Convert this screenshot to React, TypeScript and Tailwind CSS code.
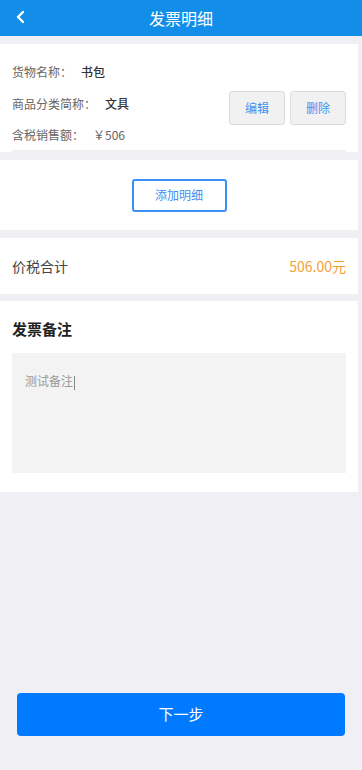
import React from "react";

const font = {
  fontFamily: '"Noto Sans CJK SC", "Liberation Sans", sans-serif',
};

function Row({ label, value, bold, h = "h-[32px]" }: { label: string; value: string; bold?: boolean; h?: string }) {
  return (
    <div className={`flex items-center ${h} text-[12px]`}>
      <span className="text-[#666]">{label}</span>
      <span className={bold ? "ml-[9px] font-medium text-[#333]" : "ml-[9px] text-[#666]"}>{value}</span>
    </div>
  );
}

export default function App() {
  return (
    <div className="w-[362px] h-[770px] bg-[#efeff4] flex flex-col" style={font}>
      <div className="h-9 bg-[#128ee9] flex items-center relative">
        <svg className="absolute left-[15px] top-[10px]" width="12" height="14" viewBox="0 0 12 14">
          <path d="M8 2 L3 7 L8 12" stroke="#fff" strokeWidth="2.4" fill="none" strokeLinecap="round" strokeLinejoin="round" />
        </svg>
        <div className="flex-1 text-center text-white text-[16px]">发票明细</div>
      </div>

      <div className="mt-2 mr-1 bg-white pt-[12px] px-3">
        <div className="flex items-start">
          <div className="flex-1">
            <Row label="货物名称：" value="书包" bold />
            <Row label="商品分类简称：" value="文具" bold />
            <Row label="含税销售额：" value="￥506" h="h-[30px]" />
          </div>
          <div className="flex gap-[5px] mt-[35px]">
            <button className="w-[56px] h-[34px] rounded-[3px] border border-[#dcdcdc] bg-[#f1f1f1] text-[#3a94f0] text-[12px]">编辑</button>
            <button className="w-[56px] h-[34px] rounded-[3px] border border-[#dcdcdc] bg-[#f1f1f1] text-[#3a94f0] text-[12px]">删除</button>
          </div>
        </div>
        <div className="h-[2px] bg-[#f0f0f3]" />
      </div>

      <div className="mt-2 mr-1 bg-white h-[70px] flex items-center justify-center">
        <button className="w-[95px] h-[33px] rounded-[3px] border-2 border-[#3b8ff5] text-[#3b8ff5] text-[12px] bg-white">添加明细</button>
      </div>

      <div className="mt-2 mr-1 bg-white h-[56px] flex items-center justify-between px-3">
        <span className="text-[14px] text-[#444]">价税合计</span>
        <span className="text-[14px] text-[#f5a033]">506.00元</span>
      </div>

      <div className="mt-[7px] mr-1 bg-white px-3 pt-[17px] pb-[19px]">
        <div className="text-[15px] font-bold text-[#222] leading-[22px]">发票备注</div>
        <div className="mt-[13px] h-[120px] bg-[#f3f3f3] px-[13px] pt-[19px] text-[12px] text-[#999]">
          测试备注<span className="inline-block w-[1px] h-[14px] bg-[#888] align-middle ml-[1px]" />
        </div>
      </div>

      <div className="flex-1" />
      <div className="px-[17px] pb-[34px]">
        <button className="w-full h-[43px] rounded-[4px] bg-[#007aff] text-white text-[15px]">下一步</button>
      </div>
    </div>
  );
}
